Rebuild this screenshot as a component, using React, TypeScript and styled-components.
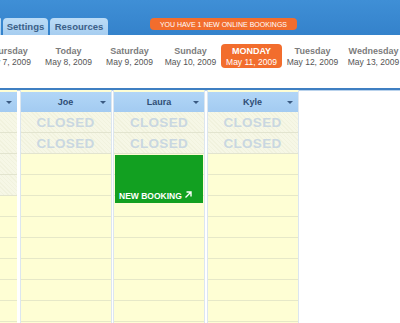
import React from "react";
import styled, { createGlobalStyle, css } from "styled-components";

const Global = createGlobalStyle`
  html, body { margin: 0; padding: 0; background: #fff; }
  body { width: 400px; height: 323px; overflow: hidden; font-family: "Liberation Sans", Arial, sans-serif; }
`;

const Page = styled.div`
  width: 400px;
  height: 323px;
  overflow: hidden;
  display: flex;
  flex-direction: column;
`;

const TopBar = styled.div`
  height: 35px;
  flex: none;
  background: linear-gradient(#3f8fd6, #3482cb);
  display: flex;
  align-items: flex-end;
`;

const Tabs = styled.div`
  display: flex;
  gap: 2px;
  align-items: flex-end;
`;

const Tab = styled.div<{ $w: number }>`
  width: ${(p) => p.$w}px;
  height: 17px;
  background: linear-gradient(#bcdcf6, #a6cdf0);
  border-radius: 4px 4px 0 0;
  display: flex;
  align-items: center;
  justify-content: center;
  font-size: 9.5px;
  font-weight: bold;
  color: #3b5f87;
`;

const Banner = styled.div`
  margin-left: 42px;
  margin-bottom: 5px;
  width: 147px;
  height: 12px;
  border-radius: 4px;
  background: #f26d2d;
  color: #fff;
  font-size: 7px;
  display: flex;
  align-items: center;
  justify-content: center;
`;

const DateStrip = styled.div`
  height: 53px;
  flex: none;
  background: #fff;
  display: flex;
  align-items: flex-start;
  padding-top: 9px;
  box-sizing: border-box;
`;

const Clip = styled.div<{ $w: number }>`
  width: ${(p) => p.$w}px;
  flex: none;
  overflow: hidden;
  display: flex;
  justify-content: flex-end;
`;

const DateItem = styled.div<{ $active?: boolean }>`
  width: 61px;
  height: 24px;
  flex: none;
  display: flex;
  flex-direction: column;
  align-items: center;
  justify-content: center;
  gap: 1px;
  border-radius: 4px;
  line-height: 10px;
  ${(p) =>
    p.$active &&
    css`
      background: #f26d2d;
    `}
`;

const DayName = styled.div<{ $active?: boolean }>`
  font-size: 9px;
  font-weight: bold;
  color: ${(p) => (p.$active ? "#fff" : "#7c7c7c")};
  text-transform: ${(p) => (p.$active ? "uppercase" : "none")};
`;

const DayDate = styled.div<{ $active?: boolean }>`
  font-size: 8.5px;
  color: ${(p) => (p.$active ? "#fff" : "#555")};
`;

const Board = styled.div`
  flex: 1;
  border-top: 2px solid #3f7fc2;
  box-shadow: inset 0 1px 0 #b9d2ec;
  display: flex;
  gap: 3.5px;
  align-items: stretch;
  background: #fff;
`;

const ColClip = styled.div<{ $w: number }>`
  width: ${(p) => p.$w}px;
  flex: none;
  overflow: hidden;
  display: flex;
  justify-content: flex-end;
`;

const Column = styled.div`
  width: 90px;
  flex: none;
  display: flex;
  flex-direction: column;
  position: relative;
  border-left: 1px solid #dce6ef;
  border-right: 1px solid #dce6ef;
  margin: 0 -1px;
  background: #fefed4;
`;

const ColHeader = styled.div`
  height: 20px;
  flex: none;
  background: linear-gradient(#b2d6f7, #a3cbf1);
  display: flex;
  align-items: center;
  justify-content: center;
  position: relative;
  font-size: 9px;
  font-weight: bold;
  color: #2f4d74;
  margin-top: 2px;
`;

const Caret = styled.span`
  position: absolute;
  right: 5px;
  top: 9px;
  width: 0;
  height: 0;
  border-left: 3px solid transparent;
  border-right: 3px solid transparent;
  border-top: 3px solid #3a5a82;
`;

const Slot = styled.div<{ $closed?: boolean }>`
  height: 21px;
  flex: none;
  box-sizing: border-box;
  border-bottom: 1px solid #e6e8c8;
  display: flex;
  align-items: center;
  justify-content: center;
  font-size: 13.5px;
  font-weight: bold;
  color: #c9d7e1;
  letter-spacing: 0.3px;
  ${(p) =>
    p.$closed &&
    css`
      background: repeating-linear-gradient(45deg, #f1f2de 0 1px, #f6f7e6 1px 3px);
      border-bottom-color: #e2e4cf;
    `}
`;

const Booking = styled.div`
  position: absolute;
  left: 1px;
  right: 1px;
  top: 65px;
  height: 48px;
  background: #12a021;
  color: #fff;
  font-size: 8.5px;
  font-weight: bold;
  display: flex;
  align-items: flex-end;
  padding: 0 0 2px 4px;
  box-sizing: border-box;
  gap: 2px;
`;

const days = [
  { n: "Thursday", d: "May 7, 2009" },
  { n: "Today", d: "May 8, 2009" },
  { n: "Saturday", d: "May 9, 2009" },
  { n: "Sunday", d: "May 10, 2009" },
  { n: "Monday", d: "May 11, 2009", active: true },
  { n: "Tuesday", d: "May 12, 2009" },
  { n: "Wednesday", d: "May 13, 2009" },
];

const ROWS = 11;

function Col({ name, closed, booking }: { name: string; closed: number; booking?: boolean }) {
  return (
    <Column>
      <ColHeader>
        {name}
        <Caret />
      </ColHeader>
      {Array.from({ length: ROWS }).map((_, i) => (
        <Slot key={i} $closed={i < closed}>
          {i < 2 && name ? "CLOSED" : ""}
        </Slot>
      ))}
      {booking && (
        <Booking>
          NEW BOOKING
          <svg width="8" height="9" viewBox="0 0 8 9" style={{ marginBottom: 2 }}>
            <path d="M1.5 7.5 L6.5 2.5 M2.5 2 H7 V6.5" stroke="#fff" strokeWidth="1.4" fill="none" />
          </svg>
        </Booking>
      )}
    </Column>
  );
}

export default function App() {
  return (
    <Page>
      <Global />
      <TopBar>
        <Tabs>
          <Tab $w={1} />
          <Tab $w={45}>Settings</Tab>
          <Tab $w={58}>Resources</Tab>
        </Tabs>
        <Banner>YOU HAVE 1 NEW ONLINE BOOKINGS</Banner>
      </TopBar>
      <DateStrip>
        {days.map((x, i) => {
          const item = (
            <DateItem key={i} $active={x.active}>
              <DayName $active={x.active}>{x.n}</DayName>
              <DayDate $active={x.active}>{x.d}</DayDate>
            </DateItem>
          );
          return i === 0 ? (
            <Clip key={i} $w={38}>
              {item}
            </Clip>
          ) : (
            item
          );
        })}
      </DateStrip>
      <Board>
        <ColClip $w={17}>
          <Col name="" closed={4} />
        </ColClip>
        <Col name="Joe" closed={2} />
        <Col name="Laura" closed={2} booking />
        <Col name="Kyle" closed={2} />
      </Board>
    </Page>
  );
}
